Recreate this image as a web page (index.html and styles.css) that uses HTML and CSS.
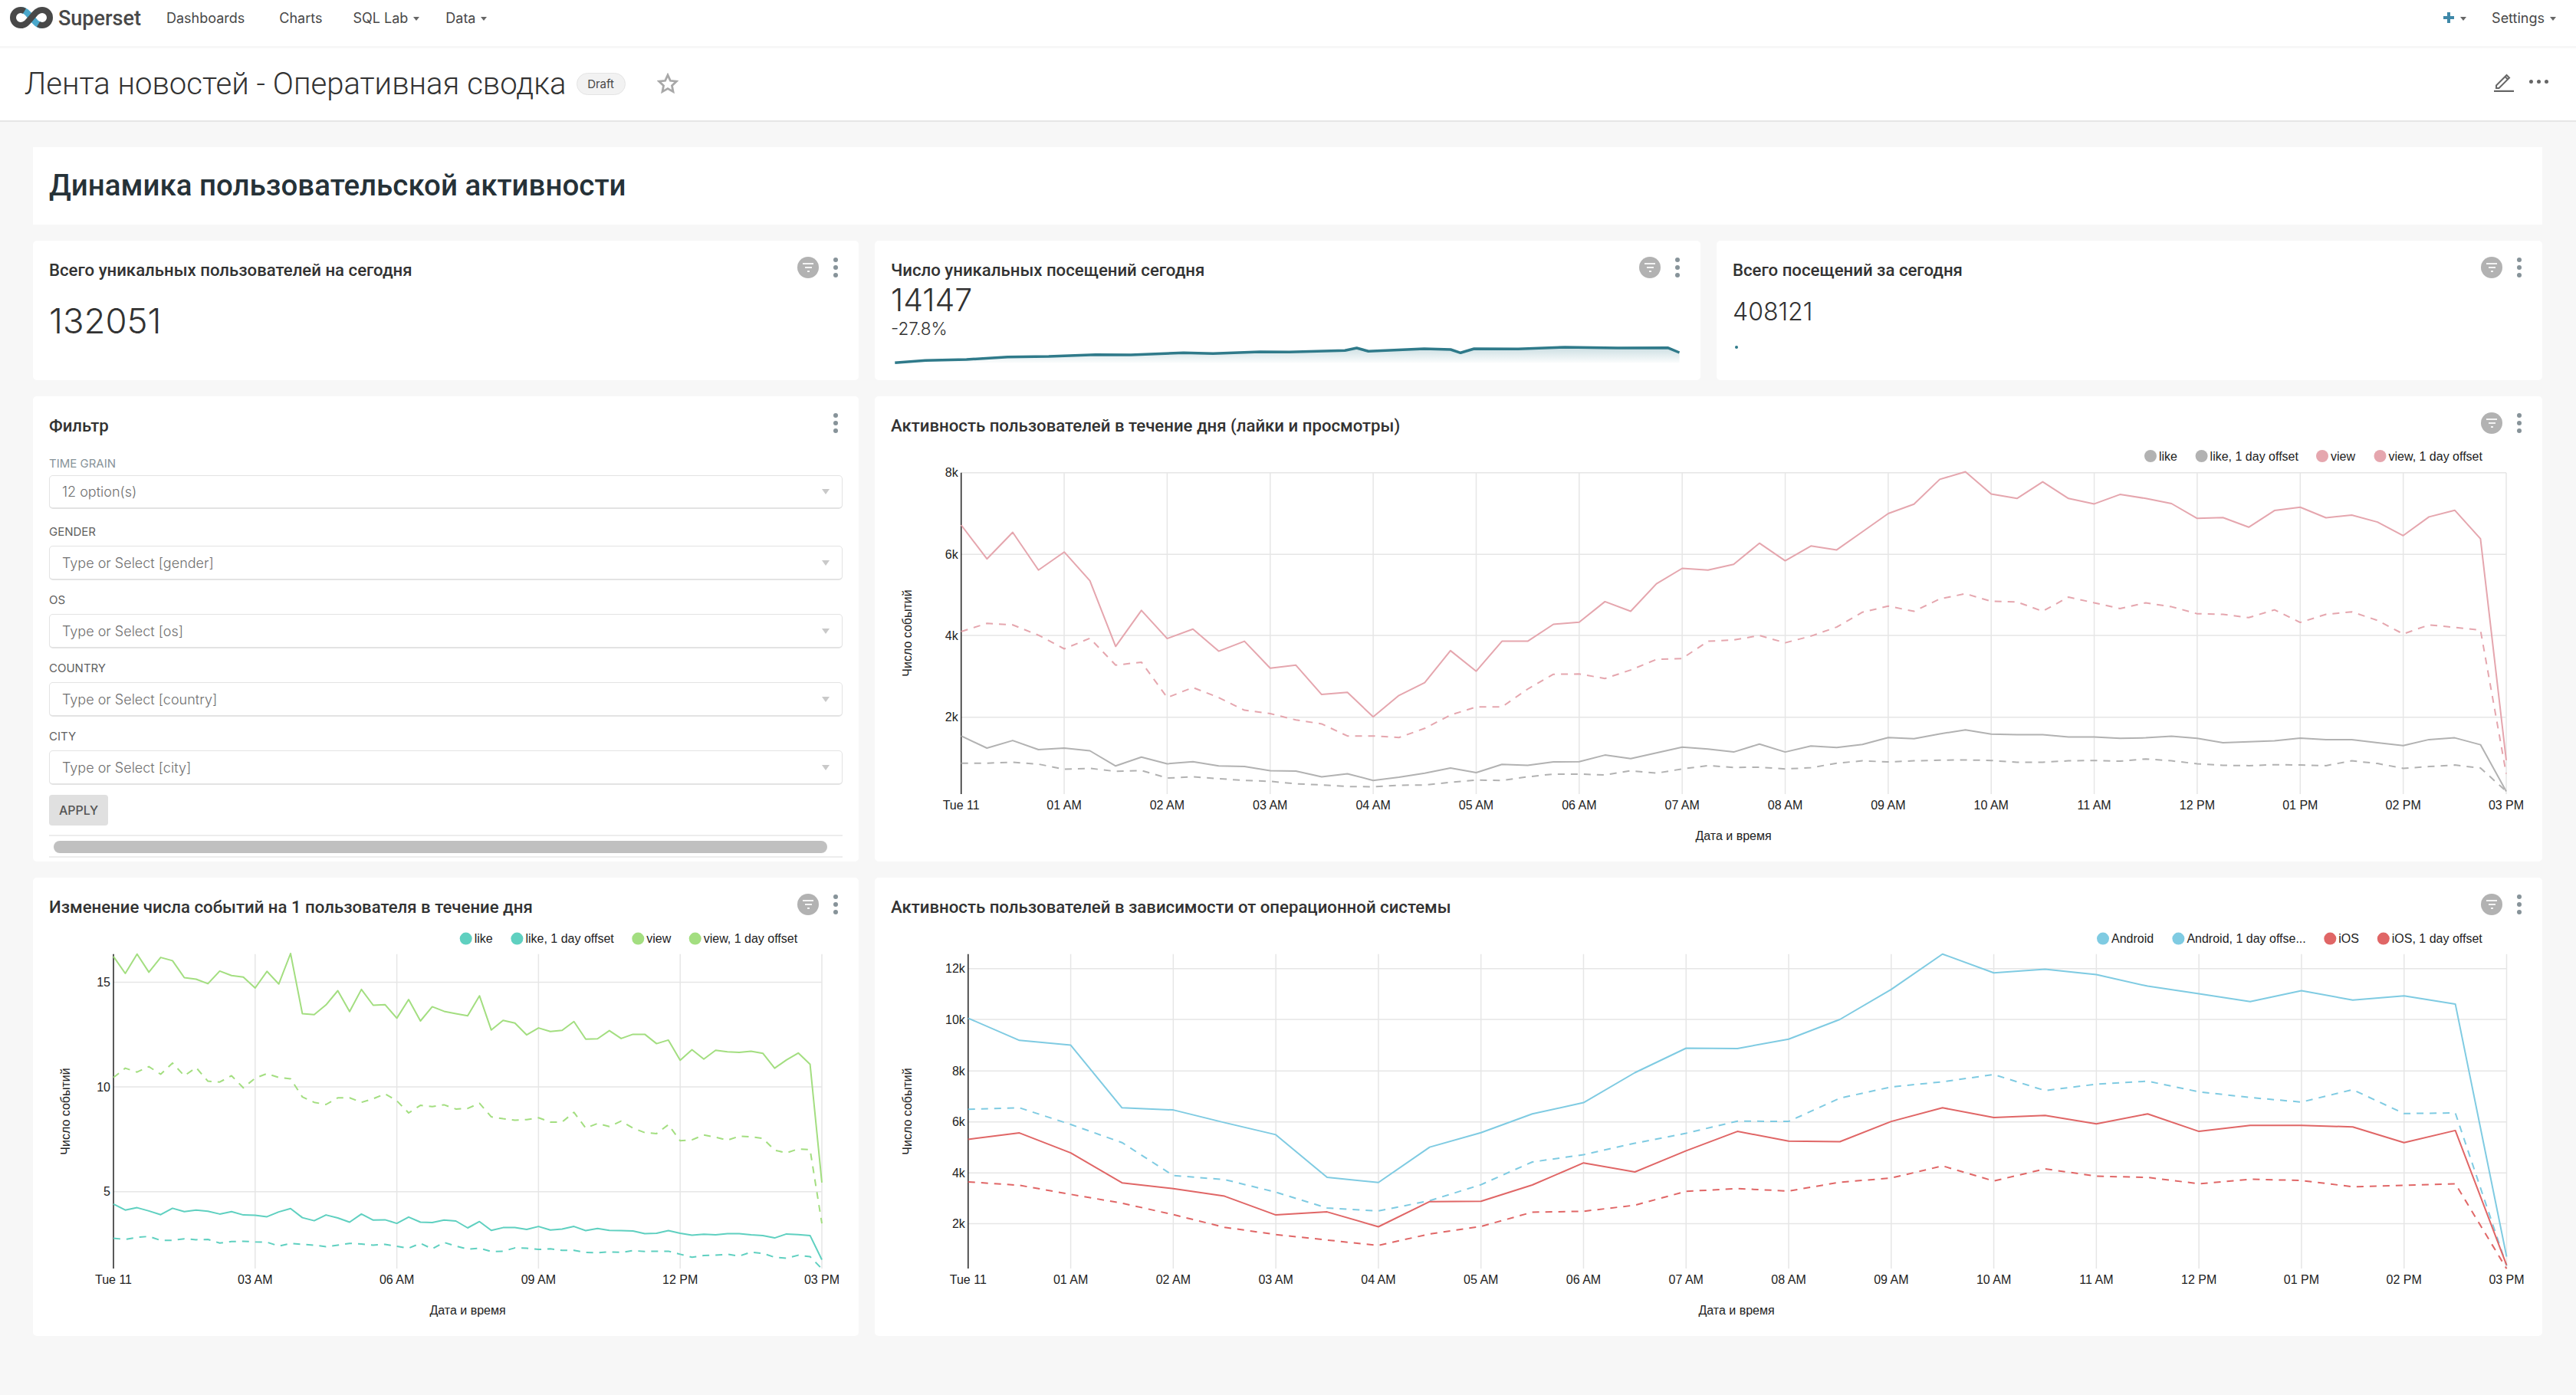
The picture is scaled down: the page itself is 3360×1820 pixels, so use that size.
FILE: index.html
```html
<!DOCTYPE html>
<html lang="en">
<head>
  <meta charset="UTF-8">
  <title>Лента новостей - Оперативная сводка</title>
  <link rel="stylesheet" href="styles.css">
</head>
<body>
  <nav class="navbar">
    <a class="brand">
      <svg class="logo" viewBox="0 0 56 30" width="56" height="30">
        <path class="logo-teal" d="M14 5 C20 5 23 9 28 15 C33 21 36 25 42 25"/>
        <path class="logo-dark" d="M19 6.4 C17.5 5.5 16 5 14 5 A10 10 0 0 0 14 25 C20 25 23 21 28 15 C33 9 36 5 42 5 A10 10 0 0 1 42 25 C40 25 38.5 24.500 37 23.600"/>
      </svg>
      <span class="brand-name">Superset</span>
    </a>
    <a class="nav-link nav-dashboards">Dashboards</a>
    <a class="nav-link nav-charts">Charts</a>
    <a class="nav-link nav-sql">SQL Lab<i class="caret"></i></a>
    <a class="nav-link">Data<i class="caret"></i></a>
    <div class="nav-right">
      <a class="nav-plus">
        <svg viewBox="0 0 16 16" width="16" height="16"><path d="M6 1h4v5h5v4h-5v5H6v-5H1V6h5z"/></svg>
        <i class="caret"></i>
      </a>
      <a class="nav-link">Settings<i class="caret"></i></a>
    </div>
  </nav>

  <header class="dash-header">
    <h1 class="dash-title">Лента новостей - Оперативная сводка</h1>
    <span class="draft">Draft</span>
    <svg class="star" viewBox="0 0 24 24" width="28" height="28"><path d="M12 2.500l2.900 6.300 6.800.8-5 4.700 1.300 6.800-6-3.400-6 3.400 1.300-6.800-5-4.700 6.800-.8z"/></svg>
    <div class="dash-actions">
      <svg class="pencil" viewBox="0 0 28 28" width="28" height="28">
        <path d="M4 19.500V23h3.500L21 9.500 17.500 6z M15.500 8l3.500 3.500"/>
        <path class="pencil-base" d="M1 27h26"/>
      </svg>
      <div class="hdots"><i></i><i></i><i></i></div>
    </div>
  </header>

  <main class="grid">
    <section class="card card-heading">
      <h2>Динамика пользовательской активности</h2>
    </section>

    <section class="card card-stat">
      <div class="card-head">
        <h3>Всего уникальных пользователей на сегодня</h3>
        <span class="filter-badge"><i></i><i></i><i></i></span>
        <span class="vdots"><i></i><i></i><i></i></span>
      </div>
      <div class="stat-big">132051</div>
    </section>

    <section class="card card-stat">
      <div class="card-head">
        <h3>Число уникальных посещений сегодня</h3>
        <span class="filter-badge"><i></i><i></i><i></i></span>
        <span class="vdots"><i></i><i></i><i></i></span>
      </div>
      <div class="stat-value">14147</div>
      <div class="stat-delta">-27.8%</div>
      <svg class="spark" id="spark" width="1078" height="36"></svg>
    </section>

    <section class="card card-stat">
      <div class="card-head">
        <h3>Всего посещений за сегодня</h3>
        <span class="filter-badge"><i></i><i></i><i></i></span>
        <span class="vdots"><i></i><i></i><i></i></span>
      </div>
      <div class="stat-mid">408121</div>
      <div class="stat-dot"></div>
    </section>

    <section class="card card-filter">
      <div class="card-head">
        <h3>Фильтр</h3>
        <span class="vdots"><i></i><i></i><i></i></span>
      </div>
      <div class="filter-body">
        <label class="muted">Time grain</label>
        <div class="select select-first">12 option(s)<i class="select-caret"></i></div>
        <label>Gender</label>
        <div class="select">Type or Select [gender]<i class="select-caret"></i></div>
        <label>OS</label>
        <div class="select">Type or Select [os]<i class="select-caret"></i></div>
        <label>Country</label>
        <div class="select">Type or Select [country]<i class="select-caret"></i></div>
        <label>City</label>
        <div class="select">Type or Select [city]<i class="select-caret"></i></div>
        <button class="apply">Apply</button>
        <div class="scrollbar"><div class="thumb"></div></div>
      </div>
    </section>

    <section class="card card-wide">
      <div class="card-head">
        <h3>Активность пользователей в течение дня (лайки и просмотры)</h3>
        <span class="filter-badge"><i></i><i></i><i></i></span>
        <span class="vdots"><i></i><i></i><i></i></span>
      </div>
      <svg class="chart" id="chart-likes" width="2175" height="531"></svg>
    </section>

    <section class="card">
      <div class="card-head">
        <h3>Изменение числа событий на 1 пользователя в течение дня</h3>
        <span class="filter-badge"><i></i><i></i><i></i></span>
        <span class="vdots"><i></i><i></i><i></i></span>
      </div>
      <svg class="chart" id="chart-per-user" width="1077" height="522"></svg>
    </section>

    <section class="card card-wide">
      <div class="card-head">
        <h3>Активность пользователей в зависимости от операционной системы</h3>
        <span class="filter-badge"><i></i><i></i><i></i></span>
        <span class="vdots"><i></i><i></i><i></i></span>
      </div>
      <svg class="chart" id="chart-os" width="2175" height="522"></svg>
    </section>
  </main>

  <script src="charts.js"></script>
</body>
</html>
```

FILE: styles.css
```css
* {
  box-sizing: border-box;
}
body {
  margin: 0;
  background: #f7f7f7;
  font-family: 'Inter', 'Liberation Sans', sans-serif;
  color: #323232;
}

/* top nav */
.navbar {
  height: 60px;
  background: #fff;
  display: flex;
  align-items: center;
  padding: 0 26px 0 13px;
  font-size: 18px;
  color: #484848;
}
.brand {
  display: flex;
  align-items: center;
  gap: 7px;
  margin-right: 33px;
}
.logo {
  display: block;
  margin-top: -14px;
}
.logo-teal {
  fill: none;
  stroke: #4aa8cc;
  stroke-width: 8;
}
.logo-dark {
  fill: none;
  stroke: #484848;
  stroke-width: 8;
}
.brand-name {
  font-family: 'Roboto', 'Inter', sans-serif;
  font-size: 27px;
  font-weight: 500;
  color: #484848;
  margin-top: -13px;
}
.nav-link {
  display: flex;
  align-items: center;
  margin-right: 34px;
  margin-top: -14px;
}
.nav-dashboards {
  margin-right: 45px;
}
.nav-charts {
  margin-right: 40px;
}
.caret {
  display: inline-block;
  width: 0;
  height: 0;
  border-left: 4px solid transparent;
  border-right: 4px solid transparent;
  border-top: 5px solid #666;
  margin-left: 7px;
  margin-top: 2px;
}
.nav-right {
  margin-left: auto;
  display: flex;
  align-items: center;
  gap: 33px;
}
.nav-right .nav-link {
  margin-right: 0;
}
.nav-plus {
  display: flex;
  align-items: center;
  margin-top: -14px;
}
.nav-plus svg {
  fill: #3f88a8;
}

/* dashboard header */
.dash-header {
  margin-top: 3px;
  height: 96px;
  background: #fff;
  border-bottom: 2px solid #e6e6e6;
  display: flex;
  align-items: center;
  padding: 0 36px 2px 32px;
}
.dash-title {
  margin: 0;
  font-family: 'Roboto', 'Inter', sans-serif;
  font-size: 40.100px;
  font-weight: 300;
  color: #323232;
}
.draft {
  margin-left: 13px;
  width: 64px;
  height: 29px;
  border: 1px solid #e4e4e4;
  border-radius: 15px;
  background: #f2f2f2;
  font-size: 15px;
  color: #484848;
  display: flex;
  align-items: center;
  justify-content: center;
}
.star {
  margin-left: 41px;
  fill: none;
  stroke: #a8a8a8;
  stroke-width: 2.400;
}
.dash-actions {
  margin-left: auto;
  display: flex;
  align-items: center;
  gap: 19px;
  margin-top: -6px;
}
.pencil {
  fill: none;
  stroke: #666;
  stroke-width: 2;
}
.pencil-base {
  stroke-width: 2.500;
}
.hdots {
  display: flex;
  gap: 5px;
}
.hdots i {
  width: 5px;
  height: 5px;
  border-radius: 50%;
  background: #666;
}

/* dashboard grid */
.grid {
  display: grid;
  grid-template-columns: repeat(3, 1fr);
  grid-template-rows: 101px 182px 607px 598px;
  gap: 21px;
  padding: 33px 44px 0 43px;
}
.card {
  background: #fff;
  border-radius: 5px;
  min-width: 0;
}
.card-heading {
  grid-column: 1 / -1;
  display: flex;
  align-items: center;
  padding: 0 21px 2px;
  border-radius: 0;
}
.card-heading h2 {
  margin: 0;
  font-family: 'Roboto', 'Inter', sans-serif;
  font-size: 38.500px;
  font-weight: 500;
  color: #263238;
}
.card-wide {
  grid-column: span 2;
}
.card-head {
  display: flex;
  align-items: center;
  height: 76px;
  padding: 0 27px 0 21px;
}
.card-head h3 {
  margin: 0;
  flex: 1;
  font-family: 'Roboto', 'Inter', sans-serif;
  font-size: 22.200px;
  font-weight: 500;
  color: #323232;
}
.filter-badge {
  width: 28px;
  height: 28px;
  border-radius: 50%;
  background: #b2b2b2;
  display: flex;
  flex-direction: column;
  align-items: center;
  justify-content: center;
  gap: 3px;
  margin-right: 19px;
  margin-top: -6px;
}
.filter-badge i {
  display: block;
  height: 2px;
  background: #f4f4f4;
  width: 14px;
}
.filter-badge i:nth-child(2) {
  width: 9px;
}
.filter-badge i:nth-child(3) {
  width: 3px;
}
.vdots {
  display: flex;
  flex-direction: column;
  gap: 4px;
  margin-top: -6px;
}
.vdots i {
  display: block;
  width: 6px;
  height: 6px;
  border-radius: 50%;
  background: #879399;
}

/* big numbers */
.stat-big {
  padding: 0 21px;
  margin-top: 1px;
  font-size: 45.500px;
  line-height: 56px;
  font-weight: 300;
}
.stat-value {
  padding: 0 21px;
  margin-top: -21px;
  font-size: 41px;
  line-height: 44px;
  font-weight: 300;
}
.stat-delta {
  padding: 0 21px;
  margin-top: 2px;
  font-size: 22.500px;
  line-height: 28px;
  font-weight: 300;
}
.spark {
  display: block;
  margin-top: 7px;
}
.stat-mid {
  padding: 0 21px;
  margin-top: -5px;
  font-size: 32px;
  line-height: 44px;
  font-weight: 300;
}
.stat-dot {
  width: 4px;
  height: 4px;
  border-radius: 50%;
  background: #2f7a8a;
  margin: 22px 0 0 24px;
}

/* filter box */
.filter-body {
  padding: 3px 21px 0;
}
.filter-body label {
  display: block;
  font-size: 15px;
  line-height: 18px;
  text-transform: uppercase;
  color: #5f5f5f;
  margin-bottom: 9px;
}
.filter-body label.muted {
  color: #879399;
  margin-bottom: 6px;
}
.select {
  height: 45px;
  border: 1px solid #e3e3e3;
  border-bottom: 2px solid #e3e3e3;
  border-radius: 5px;
  display: flex;
  align-items: center;
  justify-content: space-between;
  padding: 0 16px;
  margin-bottom: 17px;
  font-size: 18px;
  font-weight: 300;
  color: #6f6f6f;
}
.select-first {
  height: 44px;
  margin-bottom: 21px;
}
.select-caret {
  width: 0;
  height: 0;
  border-left: 5px solid transparent;
  border-right: 5px solid transparent;
  border-top: 7px solid #c9c9c9;
}
.apply {
  display: block;
  width: 77px;
  height: 40px;
  margin-top: -4px;
  border: 0;
  border-radius: 4px;
  background: #e0e0e0;
  color: #555;
  font-family: inherit;
  font-size: 16px;
  font-weight: 500;
  text-transform: uppercase;
  padding: 0;
}
.scrollbar {
  margin-top: 12px;
  height: 30px;
  border-top: 2px solid #ededed;
  border-bottom: 2px solid #ededed;
  padding: 6px 20px 0 6px;
}
.thumb {
  height: 16px;
  border-radius: 8px;
  background: #c0c0c0;
}

/* charts */
.chart {
  display: block;
  overflow: visible;
}
.chart text {
  font-family: 'Liberation Sans', Arial, sans-serif;
  font-size: 16px;
  fill: #222;
}
.chart .grid-line {
  stroke: #e6e6e6;
  stroke-width: 1.500;
}
.chart .axis-line {
  stroke: #222;
  stroke-width: 1.500;
}
.chart .series {
  fill: none;
  stroke-width: 2;
  stroke-linejoin: round;
}
.chart .dashed {
  stroke-dasharray: 9 8;
}
```

FILE: charts.js
```js
// y values are pixels read off the plot, divided by YK to get page pixels
const pink = '#e5a6ae', gray = '#b2b2b2', green = '#a3de80', teal = '#5fd0c0', blue = '#7fcbe2', red = '#e06666';
const NS = 'http://www.w3.org/2000/svg';
const YK = 2.533;

function el(parent, name, attrs, text) {
  const node = document.createElementNS(NS, name);
  for (const k in attrs) node.setAttribute(k, attrs[k]);
  if (text) node.textContent = text;
  parent.appendChild(node);
  return node;
}

function drawChart(cfg) {
  const svg = document.getElementById(cfg.id);
  const rect = svg.getBoundingClientRect();
  const top = rect.top, left = rect.left;
  const toY = (v) => cfg.y0 + v / YK - top;
  const x0 = cfg.x0 - left, x1 = cfg.x1 - left;
  const pTop = toY(cfg.top), pBottom = toY(cfg.bottom);

  // gridlines
  cfg.yTicks.forEach(([label, v]) => {
    el(svg, 'line', { class: 'grid-line', x1: x0, x2: x1, y1: toY(v), y2: toY(v) });
    el(svg, 'text', { x: x0 - 4, y: toY(v) + 5.5, 'text-anchor': 'end' }, label);
  });
  cfg.xTicks.forEach((label, i) => {
    const x = x0 + (x1 - x0) * i / (cfg.xTicks.length - 1);
    if (i > 0) el(svg, 'line', { class: 'grid-line', x1: x, x2: x, y1: pTop, y2: pBottom });
    el(svg, 'text', { x: x, y: pBottom + 20.5, 'text-anchor': 'middle' }, label);
  });
  el(svg, 'line', { class: 'axis-line', x1: x0, x2: x0, y1: pTop, y2: pBottom });

  // lines
  cfg.series.forEach((s) => {
    const step = (x1 - x0) / (s.ys.length - 1);
    const pts = s.ys.map((v, i) => (x0 + step * i).toFixed(1) + ',' + toY(v).toFixed(1)).join(' ');
    el(svg, 'polyline', { class: 'series' + (s.dashed ? ' dashed' : ''), stroke: s.color, points: pts });
  });

  // axis titles
  el(svg, 'text', { x: cfg.xTitle[0] - left, y: cfg.xTitle[1] - top + 5.5, 'text-anchor': 'middle' }, 'Дата и время');
  const ty = cfg.yTitle[1] - top, tx = cfg.yTitle[0] - left;
  el(svg, 'text', { x: 0, y: 0, 'text-anchor': 'middle', transform: `translate(${tx + 5},${ty}) rotate(-90)` }, 'Число событий');

  // legend
  cfg.legend.forEach(([name, color, cx]) => {
    el(svg, 'circle', { cx: cx - left, cy: cfg.legendY - top, r: 8, fill: color });
    el(svg, 'text', { x: cx - left + 11, y: cfg.legendY - top + 5.5 }, name);
  });
}

const hours = ['Tue 11', '01 AM', '02 AM', '03 AM', '04 AM', '05 AM', '06 AM', '07 AM', '08 AM', '09 AM', '10 AM', '11 AM', '12 PM', '01 PM', '02 PM', '03 PM'];

drawChart({
  id: 'chart-likes', x0: 1253.7, x1: 3269, y0: 520, top: 245, bottom: 1307,
  yTicks: [['8k', 245], ['6k', 515], ['4k', 783], ['2k', 1053]],
  xTicks: hours, xTitle: [2261, 1090], yTitle: [1184, 826], legendY: 595,
  legend: [['like', gray, 2805], ['like, 1 day offset', gray, 2871.6], ['view', pink, 3029], ['view, 1 day offset', pink, 3104.5]],
  series: [
    { color: gray, ys: [1115,1155,1130,1160,1155,1164,1214,1185,1207,1200,1214,1216,1230,1231,1250,1240,1262,1251,1238,1221,1236,1209,1212,1201,1200,1178,1190,1171,1152,1158,1168,1142,1168,1148,1153,1143,1120,1124,1108,1095,1109,1111,1111,1118,1118,1123,1121,1116,1123,1137,1134,1131,1122,1127,1127,1137,1147,1127,1121,1144,1298] },
    { color: gray, dashed: true, ys: [1205,1205,1202,1208,1225,1222,1232,1229,1254,1250,1256,1262,1265,1273,1277,1282,1283,1278,1277,1268,1261,1262,1250,1241,1241,1244,1230,1238,1224,1213,1219,1218,1224,1220,1205,1197,1201,1197,1195,1194,1196,1202,1202,1197,1196,1198,1191,1197,1207,1212,1213,1210,1211,1213,1197,1206,1222,1216,1211,1221,1298] },
    { color: pink, ys: [418,530,442,567,507,602,819,700,793,762,835,802,891,881,978,971,1052,981,939,833,901,802,802,746,739,671,703,612,561,567,548,478,536,487,500,440,380,349,267,242,315,330,275,330,348,317,330,347,396,393,425,370,359,394,385,408,453,391,369,463,1195] },
    { color: pink, dashed: true, ys: [770,743,748,782,827,792,881,871,988,955,988,1030,1041,1062,1075,1115,1115,1120,1090,1046,1019,1019,960,911,910,925,897,862,859,802,798,783,807,785,755,706,686,703,662,645,670,672,703,656,675,694,675,688,711,713,724,698,740,713,705,733,778,748,756,765,1240] }
  ]
});

drawChart({
  id: 'chart-per-user', x0: 148, x1: 1072, y0: 1150, top: 240, bottom: 1279,
  yTicks: [['15', 333], ['10', 679], ['5', 1025]],
  xTicks: ['Tue 11', '03 AM', '06 AM', '09 AM', '12 PM', '03 PM'], xTitle: [610, 1709], yTitle: [85.6, 1450], legendY: 1224.6,
  legend: [['like', teal, 607.7], ['like, 1 day offset', teal, 674.4], ['view', green, 832.3], ['view, 1 day offset', green, 906.7]],
  series: [
    { color: teal, ys: [1066,1086,1078,1089,1101,1080,1091,1086,1090,1099,1091,1102,1103,1108,1092,1081,1111,1121,1102,1112,1126,1099,1119,1118,1130,1109,1126,1127,1119,1122,1145,1124,1153,1144,1144,1150,1140,1152,1149,1140,1154,1147,1153,1154,1155,1164,1163,1154,1163,1169,1166,1168,1164,1164,1168,1170,1178,1165,1167,1170,1250] },
    { color: teal, dashed: true, ys: [1179,1183,1176,1173,1186,1186,1181,1184,1183,1195,1190,1189,1191,1192,1205,1196,1199,1202,1207,1202,1196,1198,1202,1199,1206,1212,1196,1214,1193,1205,1215,1212,1223,1222,1211,1212,1216,1214,1219,1219,1226,1227,1224,1226,1220,1223,1222,1222,1232,1242,1236,1235,1232,1238,1225,1229,1242,1245,1235,1240,1280] },
    { color: green, ys: [248,304,240,300,251,262,318,323,338,296,311,316,352,297,339,238,437,440,408,361,430,357,409,407,452,390,461,414,429,437,444,378,491,459,468,507,484,496,492,463,521,520,493,519,505,505,536,524,591,556,587,558,563,565,561,568,617,590,567,604,995] },
    { color: green, dashed: true, ys: [648,617,630,612,637,600,642,615,660,663,642,682,650,635,648,652,712,730,737,715,715,730,718,702,725,765,740,744,738,752,750,733,778,784,789,787,781,795,795,763,815,800,810,792,815,830,833,804,857,854,838,845,855,842,844,849,888,897,884,886,1130] }
  ]
});

drawChart({
  id: 'chart-os', x0: 1262.8, x1: 3269.5, y0: 1150, top: 240, bottom: 1279,
  yTicks: [['12k', 288], ['10k', 456], ['8k', 626], ['6k', 795], ['4k', 963], ['2k', 1131]],
  xTicks: hours, xTitle: [2265, 1709], yTitle: [1184, 1450], legendY: 1224.6,
  legend: [['Android', blue, 2743], ['Android, 1 day offse...', blue, 2841.4], ['iOS', red, 3039.3], ['iOS, 1 day offset', red, 3108.8]],
  series: [
    { color: blue, ys: [452,525,541,748,755,797,837,978,995,878,830,768,731,632,551,552,521,456,357,240,302,290,308,346,371,397,361,392,378,405,1240] },
    { color: blue, dashed: true, ys: [753,748,803,863,972,985,1027,1079,1089,1055,1002,927,903,865,832,792,793,716,679,662,638,691,670,660,695,714,729,688,767,765,1270] },
    { color: red, ys: [852,831,897,996,1015,1040,1102,1092,1141,1058,1057,1003,930,960,890,826,858,860,793,748,780,773,801,768,826,806,806,811,863,823,1268] },
    { color: red, dashed: true, ys: [993,1004,1034,1063,1101,1143,1167,1185,1203,1165,1140,1093,1090,1070,1024,1015,1023,994,980,940,990,950,974,978,999,984,988,1009,1004,999,1280] }
  ]
});

// sparkline in the second stat card
const sparkPts = [[88,520],[140,511],[210,507],[280,497],[350,495],[430,488],[490,489],[580,481],[630,484],[710,477],[760,478],[855,472],[875,462],[895,475],[990,465],[1035,468],[1052,481],[1075,465],[1150,466],[1230,459],[1320,462],[1405,461],[1425,480]];
const spark = document.getElementById('spark');
const sparkRect = spark.getBoundingClientRect();
const sp = sparkPts.map(([x, y]) => [x / 1.3067 + 1100 - sparkRect.left, y / 3 + 300 - sparkRect.top]);
const sparkLine = sp.map((p) => p[0].toFixed(1) + ',' + p[1].toFixed(1)).join(' ');
const defs = el(spark, 'defs', {});
const grad = el(defs, 'linearGradient', { id: 'spark-fill', x1: 0, x2: 0, y1: 0, y2: 1 });
el(grad, 'stop', { offset: '0', 'stop-color': '#2f7a8a', 'stop-opacity': '0.25' });
el(grad, 'stop', { offset: '1', 'stop-color': '#2f7a8a', 'stop-opacity': '0.02' });
const sparkBottom = 520 / 3 + 300 - sparkRect.top;
el(spark, 'polygon', { fill: 'url(#spark-fill)', points: `${sp[0][0]},${sparkBottom} ${sparkLine} ${sp[sp.length - 1][0]},${sparkBottom}` });
el(spark, 'polyline', { fill: 'none', stroke: '#2f7a8a', 'stroke-width': 3.5, 'stroke-linejoin': 'round', points: sparkLine });
```
